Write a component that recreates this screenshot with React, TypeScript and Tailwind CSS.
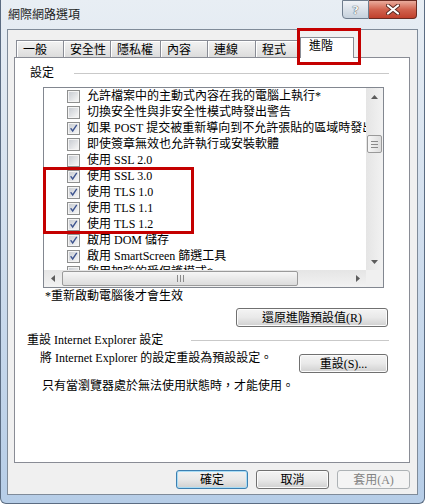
import React from "react";

const rows = [
  { label: "允許檔案中的主動式內容在我的電腦上執行*", checked: false },
  { label: "切換安全性與非安全性模式時發出警告", checked: false },
  { label: "如果 POST 提交被重新導向到不允許張貼的區域時發出警告", checked: true },
  { label: "即使簽章無效也允許執行或安裝軟體", checked: false },
  { label: "使用 SSL 2.0", checked: false },
  { label: "使用 SSL 3.0", checked: true },
  { label: "使用 TLS 1.0", checked: true },
  { label: "使用 TLS 1.1", checked: true },
  { label: "使用 TLS 1.2", checked: true },
  { label: "啟用 DOM 儲存", checked: true },
  { label: "啟用 SmartScreen 篩選工具", checked: true },
  { label: "啟用加強的受保護模式*", checked: false },
];

const tabs = [
  { label: "一般", w: "w-[47px]" },
  { label: "安全性", w: "w-[47px]" },
  { label: "隱私權", w: "w-[50px]" },
  { label: "內容", w: "w-[47px]" },
  { label: "連線", w: "w-[48px]" },
  { label: "程式", w: "w-[47px]" },
];

function CheckBox({ checked }: { checked: boolean }) {
  return (
    <span className="flex size-[13px] shrink-0 items-center justify-center border border-[#8e8f8f] bg-[#f4f4f4]">
      <span className="relative size-[9px] bg-linear-to-br from-[#c9cdd3] to-[#f6f6f6]">
        {checked && (
          <svg width="9" height="9" viewBox="0 0 9 9" className="absolute left-0 top-0">
            <polygon points="1,4.6 2.4,4.1 3.6,5.7 7.2,0.4 8.3,1.3 3.7,8.3" fill="#3f5590" />
          </svg>
        )}
      </span>
    </span>
  );
}

function Arrow({ dir }: { dir: "up" | "down" | "left" | "right" }) {
  const pts = {
    up: "0,4 7,4 3.5,0",
    down: "0,0 7,0 3.5,4",
    left: "4,0 4,7 0,3.5",
    right: "0,0 0,7 4,3.5",
  }[dir];
  const vertical = dir === "up" || dir === "down";
  return (
    <svg width={vertical ? 7 : 4} height={vertical ? 4 : 7} viewBox={vertical ? "0 0 7 4" : "0 0 4 7"}>
      <polygon points={pts} fill="#5c5c5c" />
    </svg>
  );
}

function Button({
  children,
  className,
  variant = "normal",
}: {
  children: React.ReactNode;
  className: string;
  variant?: "normal" | "default" | "disabled";
}) {
  const look =
    variant === "disabled"
      ? "border-[#adb2b5] bg-[#f4f4f4] text-[#838383]"
      : variant === "default"
        ? "border-[#3c7fb1] bg-linear-to-b from-[#f2f2f2] via-[#e8e8e8] to-[#d0d0d0] shadow-[inset_0_0_0_1px_#a8dcf5]"
        : "border-[#707070] bg-linear-to-b from-[#f4f4f4] via-[#e9e9e9] to-[#d0d0d0] shadow-[inset_0_0_0_1px_#fbfbfb]";
  return (
    <div className={`flex h-[19px] items-center justify-center rounded-[3px] border ${look} ${className}`}>
      {children}
    </div>
  );
}

export default function App() {
  return (
    <div className="relative flex h-[504px] w-[425px] flex-col overflow-hidden rounded-b-[6px] border-x border-b border-[#5b6c82] bg-linear-to-b from-[#e8eef4] via-[#cfdded] to-[#b6cde7] px-[6px] pb-[8px] font-['Liberation_Serif','Noto_Sans_CJK_TC',serif] text-[12px] leading-[16px] text-black">
      {/* title bar */}
      <div className="flex h-[29px] shrink-0 items-start">
        <span className="mt-[7px] pl-[1px] text-[#1e1e1e]">網際網路選項</span>
        <div className="ml-auto mr-[1px] flex h-[19px]">
          <div className="flex w-[27px] items-center justify-center rounded-bl-[4px] border border-[#6f7d8d] bg-linear-to-b from-[#f0f3f7] to-[#c6d1dc] text-[13px] font-bold leading-none text-white [text-shadow:0_0_1px_#3b4450,0_0_1px_#3b4450]">
            ?
          </div>
          <div className="flex w-[48px] items-center justify-center rounded-br-[4px] border border-l-0 border-[#6a2b22] bg-linear-to-b from-[#e9ab9c] via-[#d1624e] to-[#c0402c]">
            <svg width="14" height="11" viewBox="0 0 14 11">
              <path d="M2 1.5 L12 9.5 M12 1.5 L2 9.5" stroke="#5a2a22" strokeWidth="4" strokeLinecap="round" />
              <path d="M2 1.5 L12 9.5 M12 1.5 L2 9.5" stroke="#ffffff" strokeWidth="2.2" strokeLinecap="round" />
            </svg>
          </div>
        </div>
      </div>

      {/* client area */}
      <div className="flex flex-1 flex-col border border-[#7f8b99] bg-[#f0f0f0]">
        <div className="ml-[6px] mt-[7px] w-[396px]">
          {/* tabs */}
          <div className="flex h-[20px] items-end pl-[2px]">
            {tabs.map((t) => (
              <div
                key={t.label}
                className={`h-[17px] ${t.w} border-l border-t border-[#898c95] bg-linear-to-b from-[#f3f3f3] to-[#dcdcdc] pl-[6px] pt-[1px] shadow-[inset_1px_1px_0_#ffffff]`}
              >
                {t.label}
              </div>
            ))}
            <div className="relative z-10 -mb-px -ml-[2px] h-[21px] w-[54px] border-x border-t border-[#898c95] bg-white pl-[8px]">
              進階
            </div>
          </div>

          {/* panel */}
          <div className="flex h-[406px] flex-col border border-[#898c95] bg-white">
            <div className="mt-[7px] flex items-center pl-[15px] pr-[20px]">
              <span>設定</span>
              <div className="ml-[20px] h-px flex-1 bg-[#c9c9c9]" />
            </div>

            {/* list box */}
            <div className="relative ml-[28px] mt-[6px] grid h-[201px] w-[341px] grid-cols-[1fr_17px] grid-rows-[1fr_17px] border border-[#828790] bg-white">
              <div className="flex flex-col overflow-hidden">
                {rows.map((r) => (
                  <div key={r.label} className="flex h-[16px] shrink-0 items-center gap-[7px] whitespace-pre pl-[23px]">
                    <CheckBox checked={r.checked} />
                    <span>{r.label}</span>
                  </div>
                ))}
              </div>

              {/* vertical scrollbar */}
              <div className="flex flex-col bg-linear-to-r from-[#e5e5e5] to-[#f2f2f2]">
                <div className="flex h-[17px] items-center justify-center">
                  <Arrow dir="up" />
                </div>
                <div className="mx-[1px] mt-[30px] flex h-[18px] flex-col items-center justify-center gap-[2px] rounded-[2px] border border-[#9a9a9a] bg-linear-to-r from-[#f6f6f6] to-[#dedede]">
                  <div className="h-px w-[7px] bg-[#8a8a8a]" />
                  <div className="h-px w-[7px] bg-[#8a8a8a]" />
                  <div className="h-px w-[7px] bg-[#8a8a8a]" />
                </div>
                <div className="flex-1" />
                <div className="flex h-[17px] items-center justify-center">
                  <Arrow dir="down" />
                </div>
              </div>

              {/* horizontal scrollbar */}
              <div className="flex bg-linear-to-b from-[#e5e5e5] to-[#f2f2f2]">
                <div className="flex w-[17px] items-center justify-center">
                  <Arrow dir="left" />
                </div>
                <div className="my-[1px] ml-[1px] flex w-[236px] items-center justify-center gap-[2px] rounded-[2px] border border-[#9a9a9a] bg-linear-to-b from-[#f6f6f6] to-[#dcdcdc]">
                  <div className="h-[7px] w-px bg-[#8a8a8a]" />
                  <div className="h-[7px] w-px bg-[#8a8a8a]" />
                  <div className="h-[7px] w-px bg-[#8a8a8a]" />
                </div>
                <div className="flex-1" />
                <div className="flex w-[17px] items-center justify-center">
                  <Arrow dir="right" />
                </div>
              </div>
              <div className="bg-[#f0f0f0]" />

              {/* highlight over the TLS rows */}
              <div className="pointer-events-none absolute left-[-1px] top-[79px] h-[67px] w-[151px] border-[3px] border-[#c40000]" />
            </div>

            <div className="ml-[30px]">*重新啟動電腦後才會生效</div>

            <div className="mt-[4px] flex justify-end pr-[21px]">
              <Button className="w-[152px]">還原進階預設值(R)</Button>
            </div>

            <div className="mt-[5px] flex items-center pl-[12px] pr-[20px]">
              <span className="whitespace-pre">重設 Internet Explorer 設定</span>
              <div className="ml-auto h-px w-[198px] bg-[#c9c9c9]" />
            </div>

            <div className="mt-[2px] flex items-start pl-[25px] pr-[21px]">
              <span className="whitespace-pre">將 Internet Explorer 的設定重設為預設設定。</span>
              <Button className="ml-auto mt-[4px] w-[89px]">重設(S)...</Button>
            </div>

            <div className="mt-[5px] pl-[27px]">只有當瀏覽器處於無法使用狀態時，才能使用。</div>
          </div>

          {/* dialog buttons */}
          <div className="mt-[7px] flex justify-end gap-[8px]">
            <Button variant="default" className="w-[72px]">確定</Button>
            <Button className="w-[73px]">取消</Button>
            <Button variant="disabled" className="w-[73px]">套用(A)</Button>
          </div>
        </div>
      </div>

      {/* highlight around the selected tab */}
      <div className="pointer-events-none absolute left-[296px] top-[28px] h-[37px] w-[64px] border-[3px] border-[#c40000]" />
    </div>
  );
}
